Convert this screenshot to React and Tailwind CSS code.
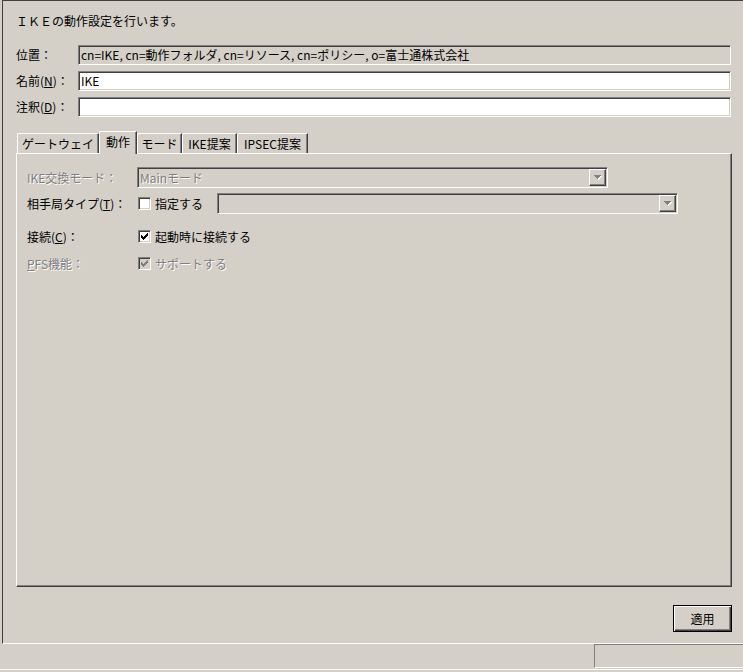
import React from 'react';

const font = "font-['MS_UI_Gothic','Noto_Sans_CJK_JP','Noto_Sans',sans-serif]";
const sunken = 'border border-t-[#808080] border-l-[#808080] border-b-white border-r-white shadow-[inset_1px_1px_0_#404040,inset_-1px_-1px_0_#d4d0c8]';
const raised = 'border border-t-white border-l-white border-b-[#404040] border-r-[#404040] shadow-[inset_-1px_-1px_0_#808080]';
const disabledText = 'text-[#808080] [text-shadow:1px_1px_0_#ffffff]';

function Field({ value, readOnly }) {
    return (
        <div className={`h-[20px] w-[653px] ${sunken} ${readOnly ? 'bg-[#d4d0c8]' : 'bg-white'} flex items-center pl-[2px] text-[12px] leading-none text-black`}>
            {value}
        </div>
    );
}

function Arrow() {
    return (
        <svg width="8" height="5" viewBox="0 0 8 5" shapeRendering="crispEdges">
            <path d="M1 1h7v1H1zM2 2h5v1H2zM3 3h3v1H3zM4 4h1v1H4z" fill="#ffffff" />
            <path d="M0 0h7v1H0zM1 1h5v1H1zM2 2h3v1H2zM3 3h1v1H3z" fill="#808080" />
        </svg>
    );
}

function Combo({ className, value }) {
    return (
        <div className={`h-[21px] ${className} ${sunken} bg-[#d4d0c8] flex items-center justify-between p-[1px]`}>
            <span className={`pl-[1px] text-[12px] leading-none ${disabledText}`}>{value}</span>
            <div className={`w-[17px] h-[17px] ${raised} bg-[#d4d0c8] flex items-center justify-center`}>
                <Arrow />
            </div>
        </div>
    );
}

function Check({ checked, disabled }) {
    return (
        <div className={`w-[13px] h-[13px] shrink-0 ${sunken} ${disabled ? 'bg-[#d4d0c8]' : 'bg-white'} flex items-center justify-center`}>
            {checked && (
                <svg width="7" height="7" viewBox="0 0 7 7" shapeRendering="crispEdges">
                    <path d="M0 2h1v3H0zM1 3h1v3H1zM2 4h1v3H2zM3 3h1v3H3zM4 2h1v3H4zM5 1h1v3H5zM6 0h1v3H6z" fill={disabled ? '#808080' : '#000000'} />
                </svg>
            )}
        </div>
    );
}

function Tab({ label, width, selected }) {
    if (selected) {
        return (
            <div className={`${width} h-[23px] -mb-px relative z-10 bg-[#d4d0c8] border-t border-l border-r border-t-white border-l-white border-r-[#404040] shadow-[inset_-1px_0_0_#808080] rounded-tl-[2px] flex items-start justify-center pt-[3px] text-[12px] leading-[14px] text-black`}>
                {label}
            </div>
        );
    }
    return (
        <div className={`${width} h-[20px] border-t border-l border-r border-t-white border-l-white border-r-[#404040] shadow-[inset_-1px_0_0_#808080] rounded-tl-[2px] flex items-center justify-center text-[12px] leading-none text-black`}>
            {label}
        </div>
    );
}

export default function App() {
    return (
        <div className={`w-[743px] h-[672px] bg-[#d4d0c8] overflow-hidden ${font}`}>
            <div className="h-[644px] ml-[2px] border-t border-l border-b border-t-[#404040] border-l-[#404040] border-b-white pl-[13px] pt-[12px]">
                <div className="h-[16px] flex items-center text-[12px] leading-none text-black">ＩＫＥの動作設定を行います。</div>

                <div className="mt-[16px] flex items-center h-[20px]">
                    <div className="w-[62px] text-[12px] leading-none text-black">位置：</div>
                    <Field readOnly value="cn=IKE, cn=動作フォルダ, cn=リソース, cn=ポリシー, o=富士通株式会社" />
                </div>
                <div className="mt-[6px] flex items-center h-[20px]">
                    <div className="w-[62px] text-[12px] leading-none text-black">名前(<span className="underline underline-offset-1">N</span>)：</div>
                    <Field value="IKE" />
                </div>
                <div className="mt-[6px] flex items-center h-[20px]">
                    <div className="w-[62px] text-[12px] leading-none text-black">注釈(<span className="underline underline-offset-1">D</span>)：</div>
                    <Field value="" />
                </div>

                <div className="mt-[14px] h-[22px] flex items-end pl-px">
                    <Tab label="ゲートウェイ" width="w-[82px]" />
                    <Tab label="動作" width="w-[38px]" selected />
                    <Tab label="モード" width="w-[45px]" />
                    <Tab label="IKE提案" width="w-[55px]" />
                    <Tab label="IPSEC提案" width="w-[71px]" />
                </div>
                <div className={`w-[716px] h-[434px] ${raised} bg-[#d4d0c8] pl-[10px] pt-[13px]`}>
                    <div className="flex items-center h-[21px]">
                        <div className={`w-[110px] text-[12px] leading-none ${disabledText}`}>IKE交換モード：</div>
                        <Combo className="w-[471px]" value="Mainモード" />
                    </div>
                    <div className="mt-[5px] flex items-center h-[21px]">
                        <div className="w-[111px] text-[12px] leading-none text-black">相手局タイプ(<span className="underline underline-offset-1">T</span>)：</div>
                        <div className="w-[79px] flex items-center gap-[4px]">
                            <Check />
                            <span className="text-[12px] leading-none text-black">指定する</span>
                        </div>
                        <Combo className="w-[461px]" value="" />
                    </div>
                    <div className="mt-[12px] flex items-center h-[21px]">
                        <div className="w-[111px] text-[12px] leading-none text-black">接続(<span className="underline underline-offset-1">C</span>)：</div>
                        <div className="flex items-center gap-[4px]">
                            <Check checked />
                            <span className="text-[12px] leading-none text-black">起動時に接続する</span>
                        </div>
                    </div>
                    <div className="mt-[6px] flex items-center h-[21px]">
                        <div className={`w-[111px] text-[12px] leading-none ${disabledText}`}><span className="underline underline-offset-1">P</span>FS機能：</div>
                        <div className="flex items-center gap-[4px]">
                            <Check checked disabled />
                            <span className={`text-[12px] leading-none ${disabledText}`}>サポートする</span>
                        </div>
                    </div>
                </div>

                <div className="w-[716px] mt-[18px] flex justify-end">
                    <button className="w-[59px] h-[27px] border border-black bg-[#d4d0c8] shadow-[inset_1px_1px_0_#ffffff,inset_-1px_-1px_0_#404040,inset_-2px_-2px_0_#808080] text-[12px] leading-none text-black flex items-center justify-center">
                        適用
                    </button>
                </div>
            </div>

            <div className="h-[28px] flex flex-col">
                <div className="h-[24px] flex justify-end">
                    <div className="w-[149px] h-[24px] border-t border-l border-b border-t-[#808080] border-l-[#808080] border-b-white" />
                </div>
                <div className="mt-px h-px bg-white" />
            </div>
        </div>
    );
}
